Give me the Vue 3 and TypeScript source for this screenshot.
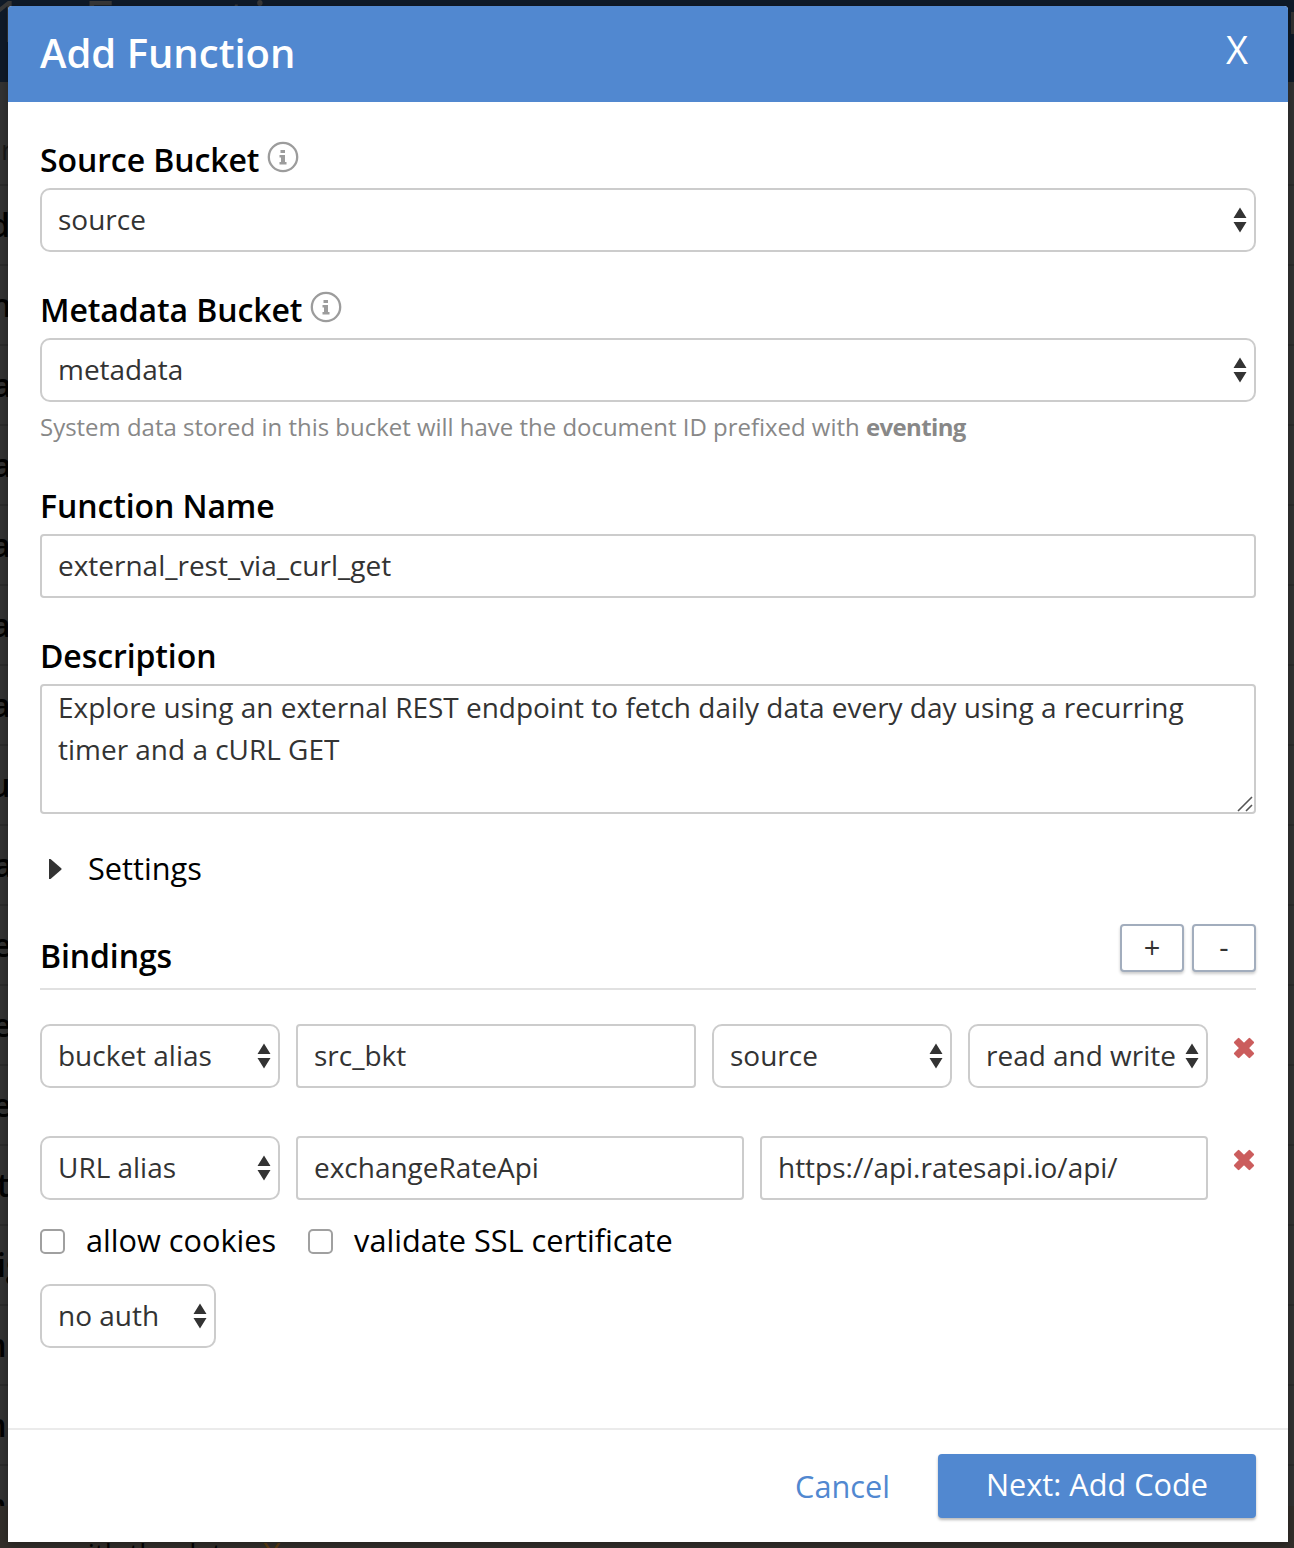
<script setup lang="ts">
import { ref } from 'vue'

interface RowMark {
  text: string
  shift: number
}

const backdropRows: RowMark[] = [
  { text: 'd', shift: -10 },
  { text: 'n', shift: -9 },
  { text: 'a', shift: -7 },
  { text: 'a', shift: -7 },
  { text: 'a', shift: -8 },
  { text: 'a', shift: -8 },
  { text: 'a', shift: -8 },
  { text: 'u', shift: -10 },
  { text: 'a', shift: -6 },
  { text: 'e', shift: -7 },
  { text: 'e', shift: -7 },
  { text: 'e', shift: -7 },
  { text: 't', shift: -3 },
  { text: 'ig', shift: -3 },
  { text: 'm', shift: -24 },
  { text: 'm', shift: -24 },
  { text: 'm', shift: -24 },
]

const sourceBucket = ref('source')
const metadataBucket = ref('metadata')
const functionName = ref('external_rest_via_curl_get')
const description = ref(
  'Explore using an external REST endpoint to fetch daily data every day using a recurring timer and a cURL GET',
)
const bucketAlias = ref('src_bkt')
const urlAlias = ref('exchangeRateApi')
const urlValue = ref('https://api.ratesapi.io/api/')
const allowCookies = ref(false)
const validateSsl = ref(false)
</script>

<template>
  <div class="screen">
    <div class="page" aria-hidden="true">
      <div class="page-top"><span class="page-num">1</span><span class="page-title">Eventing</span><i></i></div>
      <div class="page-head">r</div>
      <div v-for="(row, i) in backdropRows" :key="i" class="page-row">
        <span :style="{ marginLeft: row.shift + 'px' }">{{ row.text }}</span>
      </div>
      <div class="page-note"><span>with the data</span><b>X</b></div>
    </div>

    <section class="dialog">
      <header class="dialog-header">
        <h1>Add Function</h1>
        <button class="close" type="button">X</button>
      </header>

      <div class="dialog-body">
        <div class="field">
          <label class="title">
            <span>Source Bucket</span>
            <svg class="info" viewBox="0 0 32 32"><circle cx="16" cy="16" r="14.2" /><path d="M13.500 9h4.500v3h-4.500zM12.500 14h5.500v7h1.500v2.500h-7V21h1.500v-4.500h-1.500z" /></svg>
          </label>
          <div class="select">
            <select v-model="sourceBucket"><option>source</option></select>
            <svg class="arrows" viewBox="0 0 14 26"><path d="M7 .5L13.500 11H.5zM7 25.500L.5 15h13z" /></svg>
          </div>
        </div>

        <div class="field">
          <label class="title">
            <span>Metadata Bucket</span>
            <svg class="info" viewBox="0 0 32 32"><circle cx="16" cy="16" r="14.2" /><path d="M13.500 9h4.500v3h-4.500zM12.500 14h5.500v7h1.500v2.500h-7V21h1.500v-4.500h-1.500z" /></svg>
          </label>
          <div class="select">
            <select v-model="metadataBucket"><option>metadata</option></select>
            <svg class="arrows" viewBox="0 0 14 26"><path d="M7 .5L13.500 11H.5zM7 25.500L.5 15h13z" /></svg>
          </div>
          <p class="help">System data stored in this bucket will have the document ID prefixed with <b>eventing</b></p>
        </div>

        <div class="field">
          <label class="title"><span>Function Name</span></label>
          <input v-model="functionName" class="text" type="text" spellcheck="false" />
        </div>

        <div class="field">
          <label class="title"><span>Description</span></label>
          <div class="area">
            <textarea v-model="description" spellcheck="false"></textarea>
            <svg class="grip" viewBox="0 0 16 16"><path d="M1 15L15 1M9 15l6-6" /></svg>
          </div>
        </div>

        <div class="settings">
          <svg viewBox="0 0 14 22"><path d="M1 1v20h1.500L13.500 11.500v-1L2.500 1z" /></svg>
          <span>Settings</span>
        </div>

        <div class="bindings-head">
          <h2>Bindings</h2>
          <button type="button">+</button>
          <button type="button">-</button>
        </div>

        <div class="binding">
          <div class="select w240">
            <select><option>bucket alias</option></select>
            <svg class="arrows" viewBox="0 0 14 26"><path d="M7 .5L13.500 11H.5zM7 25.500L.5 15h13z" /></svg>
          </div>
          <input v-model="bucketAlias" class="text grow" type="text" spellcheck="false" />
          <div class="select w240">
            <select><option>source</option></select>
            <svg class="arrows" viewBox="0 0 14 26"><path d="M7 .5L13.500 11H.5zM7 25.500L.5 15h13z" /></svg>
          </div>
          <div class="select w240">
            <select><option>read and write</option></select>
            <svg class="arrows" viewBox="0 0 14 26"><path d="M7 .5L13.500 11H.5zM7 25.500L.5 15h13z" /></svg>
          </div>
          <svg class="remove" viewBox="0 0 22 22"><path d="M2 5.600L5.600 2 11 7.300 16.400 2 20 5.600 14.700 11l5.300 5.400-3.600 3.600L11 14.700 5.600 20 2 16.400 7.300 11z" /></svg>
        </div>

        <div class="binding">
          <div class="select w240">
            <select><option>URL alias</option></select>
            <svg class="arrows" viewBox="0 0 14 26"><path d="M7 .5L13.500 11H.5zM7 25.500L.5 15h13z" /></svg>
          </div>
          <input v-model="urlAlias" class="text grow" type="text" spellcheck="false" />
          <input v-model="urlValue" class="text grow" type="text" spellcheck="false" />
          <svg class="remove" viewBox="0 0 22 22"><path d="M2 5.600L5.600 2 11 7.300 16.400 2 20 5.600 14.700 11l5.300 5.400-3.600 3.600L11 14.700 5.600 20 2 16.400 7.300 11z" /></svg>
        </div>

        <div class="checks">
          <label><input v-model="allowCookies" type="checkbox" /><span>allow cookies</span></label>
          <label><input v-model="validateSsl" type="checkbox" /><span>validate SSL certificate</span></label>
        </div>

        <div class="select auth">
          <select><option>no auth</option></select>
          <svg class="arrows" viewBox="0 0 14 26"><path d="M7 .5L13.500 11H.5zM7 25.500L.5 15h13z" /></svg>
        </div>
      </div>

      <footer class="dialog-footer">
        <a class="cancel">Cancel</a>
        <button class="next" type="button">Next: Add Code</button>
      </footer>
    </section>
  </div>
</template>

<style>
body {
  margin: 0;
  background: #323232;
}
</style>

<style scoped>
.screen,
.screen * {
  box-sizing: border-box;
}

.screen {
  position: relative;
  width: 1294px;
  height: 1548px;
  overflow: hidden;
  font-family: 'Open Sans', 'Noto Sans', sans-serif;
  color: #000;
}

button,
input,
select,
textarea {
  font-family: inherit;
  margin: 0;
  outline: none;
}

.page {
  background: #323232;
  white-space: nowrap;
}

.page-top {
  height: 82px;
  display: flex;
  background: #0f1a28;
  color: #383838;
  font-size: 56px;
  line-height: 40px;
}

.page-num {
  width: 92px;
  margin-left: -8px;
}

.page-title {
  flex: 1;
  letter-spacing: 4.8px;
}

.page-top i {
  width: 3px;
  height: 22px;
  margin-top: 12px;
  background: #323232;
}

.page-head {
  height: 104px;
  padding: 48px 0 0 1px;
  border-bottom: 2px solid #2a2a2a;
  color: #181818;
  font-size: 28px;
  line-height: 38px;
}

.page-row {
  height: 80px;
  border-bottom: 2px solid #2a2a2a;
  font-size: 32px;
  font-weight: 600;
  line-height: 78px;
}

.page-row:nth-last-child(2) {
  height: 40px;
  overflow: hidden;
  border: 0;
}

.page-row:nth-last-child(2) span {
  display: block;
}

.page-note {
  height: 42px;
  padding-left: 66px;
  display: flex;
  background: #322e2a;
  font-size: 28px;
  line-height: 95px;
}

.page-note span {
  width: 197px;
}

.page-note b {
  color: #5b3c12;
  font-weight: 400;
  font-size: 31px;
}

.dialog {
  position: absolute;
  left: 8px;
  top: 6px;
  width: 1280px;
  height: 1536px;
  display: flex;
  flex-direction: column;
  background: #fff;
  border-radius: 4px 4px 0 0;
  box-shadow: 0 2px 8px rgba(0, 0, 0, 0.3);
}

.dialog-header {
  height: 96px;
  padding: 0 40px 0 32px;
  display: flex;
  justify-content: space-between;
  background: #5188d0;
  color: #fff;
  border-radius: 4px 4px 0 0;
}

.dialog-header h1 {
  margin: 0;
  font-size: 40px;
  font-weight: 600;
  line-height: 93px;
}

.close {
  padding: 0;
  border: 0;
  background: none;
  color: #fff;
  font-size: 38px;
  font-weight: 400;
  line-height: 87px;
  height: 87px;
}

.dialog-body {
  flex: 1;
  padding: 32px;
}

.field {
  margin-bottom: 32px;
}

.title {
  display: flex;
  height: 54px;
  font-size: 32px;
  font-weight: 600;
  line-height: 52px;
  letter-spacing: -0.1px;
}

.info {
  width: 32px;
  height: 32px;
  margin: 7px 0 0 8px;
  fill: #9c9c9c;
}

.info circle {
  fill: none;
  stroke: #9c9c9c;
  stroke-width: 2.3;
}

.select {
  position: relative;
  height: 64px;
}

.select select {
  appearance: none;
  display: block;
  width: 100%;
  height: 64px;
  padding: 0 16px 2px;
  border: 2px solid #ccc;
  border-radius: 10px;
  background: #fff;
  color: #333;
  font-size: 27.970px;
}

.arrows {
  position: absolute;
  right: 9.500px;
  top: 19px;
  width: 14px;
  height: 26px;
  fill: #333;
}

.text {
  display: block;
  width: 100%;
  height: 64px;
  padding: 0 16px 2px;
  border: 2px solid #ccc;
  border-radius: 4px;
  background: #fff;
  color: #333;
  font-size: 27.970px;
}

.help {
  height: 46px;
  margin: 0;
  color: #888;
  font-size: 23.960px;
  line-height: 50px;
  white-space: nowrap;
}

.help b {
  font-weight: 700;
  letter-spacing: -0.6px;
}

.area {
  position: relative;
  height: 130px;
}

.area textarea {
  display: block;
  width: 100%;
  height: 130px;
  padding: 0 16px;
  border: 2px solid #ccc;
  border-radius: 4px;
  resize: none;
  overflow: hidden;
  color: #333;
  font-size: 27.970px;
  line-height: 42px;
}

.grip {
  position: absolute;
  right: 3px;
  bottom: 2px;
  width: 16px;
  height: 16px;
  stroke: #555;
  stroke-width: 1.6;
  fill: none;
}

.settings {
  display: flex;
  align-items: center;
  height: 46px;
  font-size: 30.700px;
}

.settings span {
  margin-top: -2px;
}

.settings svg {
  width: 14px;
  height: 22px;
  margin: 0 26px 0 8px;
  fill: #333;
}

.bindings-head {
  display: flex;
  height: 98px;
  margin-bottom: 34px;
  padding-top: 32px;
  border-bottom: 2px solid #e1e1e1;
}

.bindings-head h2 {
  flex: 1;
  margin: 0;
  font-size: 32px;
  font-weight: 600;
  line-height: 64px;
  letter-spacing: -0.1px;
}

.bindings-head button {
  width: 64px;
  height: 48px;
  margin-left: 8px;
  padding: 0 0 4px;
  border: 2px solid #a2adbd;
  border-radius: 4px;
  background: #fff;
  box-shadow: 0 2px 3px rgba(0, 0, 0, 0.2);
  color: #333;
  font-size: 29px;
}

.binding {
  display: flex;
  gap: 16px;
  height: 64px;
  margin-bottom: 48px;
}

.w240 {
  width: 240px;
  flex: none;
}

.grow {
  flex: 1;
  width: 0;
}

.remove {
  width: 22px;
  height: 22px;
  margin: 13px 1px 0 9px;
  fill: #cb5d5d;
  stroke: #cb5d5d;
  stroke-width: 2.200;
  stroke-linejoin: round;
}

.checks {
  display: flex;
  gap: 32px;
  height: 84px;
  margin-top: -48px;
}

.checks label {
  display: flex;
  align-items: center;
  height: 82px;
  font-size: 30.700px;
}

.checks span {
  margin-top: -3px;
}

.checks input {
  appearance: none;
  width: 25px;
  height: 25px;
  margin-right: 21px;
  border: 2px solid #a0a0a0;
  border-radius: 5px;
  background: #fff;
}

.auth {
  width: 176px;
}

.dialog-footer {
  display: flex;
  height: 114px;
  padding: 24px 32px 0;
  justify-content: flex-end;
  border-top: 2px solid #ebebeb;
}

.cancel {
  margin-right: 48px;
  color: #5188d0;
  font-size: 30.700px;
  line-height: 64px;
}

.next {
  width: 318px;
  height: 64px;
  padding: 0 0 4px;
  border: 0;
  border-radius: 4px;
  background: #5188d0;
  box-shadow: 0 2px 3px rgba(0, 0, 0, 0.28);
  color: #fff;
  font-size: 30.700px;
}
</style>
